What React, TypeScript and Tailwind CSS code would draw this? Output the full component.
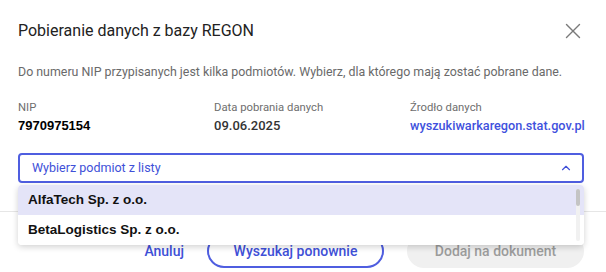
import { X, ChevronUp } from 'lucide-react'

const entities = ['AlfaTech Sp. z o.o.', 'BetaLogistics Sp. z o.o.']

export default function App() {
  return (
    <div className="w-[606px] h-[272px] bg-white overflow-hidden font-['Roboto',sans-serif]">
      <div className="flex items-center justify-between pl-[18px] pr-[20px] pt-[20px] h-[42px]">
        <h1 className="text-[16px] leading-[22px] font-normal text-[#222]">Pobieranie danych z bazy REGON</h1>
        <X className="w-[26px] h-[26px] text-[#7a7a7a]" strokeWidth={1.3} />
      </div>

      <div className="pl-[18px] pr-[22px]">
        <p className="mt-[22px] text-[12.4px] leading-[16px] text-[#6a6a6a]">
          Do numeru NIP przypisanych jest kilka podmiotów. Wybierz, dla którego mają zostać pobrane dane.
        </p>

        <div className="mt-[21px] grid grid-cols-[196px_196px_1fr]">
          <div>
            <div className="text-[11.3px] leading-[14px] text-[#6e6e6e]">NIP</div>
            <div className="mt-[2px] text-[13px] leading-[18px] font-bold text-black font-['Liberation_Sans',sans-serif]">7970975154</div>
          </div>
          <div>
            <div className="text-[11.3px] leading-[14px] text-[#6e6e6e]">Data pobrania danych</div>
            <div className="mt-[2px] text-[13px] leading-[18px] font-medium text-[#333]">09.06.2025</div>
          </div>
          <div>
            <div className="text-[11.3px] leading-[14px] text-[#6e6e6e]">Źrodło danych</div>
            <div className="mt-[2px] text-[12.7px] leading-[18px] font-medium text-[#3f51dd]">wyszukiwarkaregon.stat.gov.pl</div>
          </div>
        </div>

        <div className="relative mt-[18px]">
          <div className="flex items-center justify-between h-[30px] pl-[12px] pr-[9px] border-2 border-[#4f5ee0] rounded-[4px]">
            <span className="text-[12.5px] text-[#4050d8]">Wybierz podmiot z listy</span>
            <ChevronUp className="w-[14px] h-[14px] text-[#4050d8]" strokeWidth={2} />
          </div>

          <div className="absolute left-0 right-0 top-[32px] z-10 bg-white rounded-[4px] shadow-[0_2px_6px_rgba(0,0,0,0.18)] overflow-hidden">
            {entities.map((name, i) => (
              <div
                key={name}
                className={`h-[30px] flex items-center pl-[10px] text-[13.5px] font-bold text-[#111] font-['Liberation_Sans',sans-serif] ${i === 0 ? 'bg-[#e4e4f8]' : 'bg-white'}`}
              >
                {name}
              </div>
            ))}
            <div className="absolute right-[4px] top-[4px] bottom-[4px] w-[4px] bg-[#f1f1f1] rounded-full">
              <div className="h-[17px] w-full bg-[#c4c4c4] rounded-full" />
            </div>
          </div>
        </div>
      </div>

      <div className="mt-[28px] border-t border-[#e6e6e6]" />

      <div className="flex items-center justify-end gap-[23px] pl-[18px] pr-[22px] pt-[22px]">
        <button className="text-[14px] font-medium text-[#4050d8]">Anuluj</button>
        <button className="w-[177px] h-[34px] rounded-full border-2 border-[#4f5ee0] text-[14px] font-medium text-[#4050d8]">
          Wyszukaj ponownie
        </button>
        <button disabled className="w-[177px] h-[34px] rounded-full bg-[#f0f0f0] text-[14px] font-medium text-[#9c9c9c]">
          Dodaj na dokument
        </button>
      </div>
    </div>
  )
}
